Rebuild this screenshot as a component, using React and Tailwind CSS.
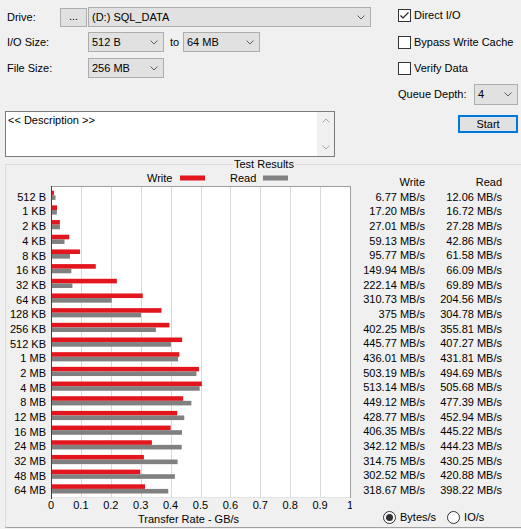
import React from 'react'

const ROWS = [
  ['512 B', '6.77', '12.06'],
  ['1 KB', '17.20', '16.72'],
  ['2 KB', '27.01', '27.28'],
  ['4 KB', '59.13', '42.86'],
  ['8 KB', '95.77', '61.58'],
  ['16 KB', '149.94', '66.09'],
  ['32 KB', '222.14', '69.89'],
  ['64 KB', '310.73', '204.56'],
  ['128 KB', '375', '304.78'],
  ['256 KB', '402.25', '355.81'],
  ['512 KB', '445.77', '407.27'],
  ['1 MB', '436.01', '431.81'],
  ['2 MB', '503.19', '494.69'],
  ['4 MB', '513.14', '505.68'],
  ['8 MB', '449.12', '477.39'],
  ['12 MB', '428.77', '452.94'],
  ['16 MB', '406.35', '445.22'],
  ['24 MB', '342.12', '444.23'],
  ['32 MB', '314.75', '430.25'],
  ['48 MB', '302.52', '420.88'],
  ['64 MB', '318.67', '398.22'],
]

const FONT = { fontFamily: '"Liberation Sans", Arial, sans-serif' }

function Chevron({ color = '#606060' }) {
  return (
    <svg width="8" height="5" viewBox="0 0 8 5" className="block">
      <polyline points="0.5,0.5 4,4 7.5,0.5" fill="none" stroke={color} strokeWidth="1" />
    </svg>
  )
}

function Combo({ value, className }) {
  return (
    <div className={`flex items-center border border-[#adadad] bg-[#e1e1e1] ${className}`}>
      <span className="flex-1 pl-[3px] leading-none">{value}</span>
      <span className="w-[18px] flex justify-center"><Chevron /></span>
    </div>
  )
}

function Check({ checked, label }) {
  return (
    <div className="flex items-center h-[17px]">
      <span className="w-[13px] h-[13px] border border-[#333] bg-white flex items-center justify-center">
        {checked && (
          <svg width="11" height="11" viewBox="0 0 11 11">
            <polyline points="1.5,5.5 4,8 9.5,2.5" fill="none" stroke="#222" strokeWidth="1.2" />
          </svg>
        )}
      </span>
      <span className="ml-[3px]">{label}</span>
    </div>
  )
}

function Radio({ checked, label }) {
  return (
    <div className="flex items-center">
      <span className="w-[13px] h-[13px] rounded-full border border-[#333] bg-white flex items-center justify-center">
        {checked && <span className="w-[7px] h-[7px] rounded-full bg-[#333]" />}
      </span>
      <span className="ml-[4px]">{label}</span>
    </div>
  )
}

function Chart() {
  const X0 = 51
  const PW = 299
  const TOP = 186
  const BOT = 498
  const c0 = 195.3
  const pitch = 14.68
  const xv = v => (parseFloat(v) / 1024) * PW
  return (
    <svg width="346" height="362" viewBox="6 165 346 362" className="block flex-shrink-0" style={FONT}>
      <text x="147" y="182" fontSize="11" fill="#000">Write</text>
      <rect x="180" y="175.5" width="25" height="5" fill="#e3161e" />
      <text x="230" y="182" fontSize="11" fill="#000">Read</text>
      <rect x="263" y="175.5" width="25" height="5" fill="#808080" />

      <rect x={X0} y={TOP} width={PW} height={BOT - TOP} fill="#fff" />
      {Array.from({ length: 9 }, (_, k) => {
        const x = Math.round(X0 + (k + 1) * 29.9) + 0.5
        return <line key={k} x1={x} x2={x} y1={TOP} y2={BOT} stroke="#dadada" />
      })}
      <line x1={X0} x2={X0 + PW + 0.5} y1={TOP + 0.5} y2={TOP + 0.5} stroke="#a0a0a0" />
      <line x1={X0 + PW + 0.5} x2={X0 + PW + 0.5} y1={TOP} y2={BOT} stroke="#a0a0a0" />
      <line x1={X0} x2={X0 + PW} y1={BOT - 0.5} y2={BOT - 0.5} stroke="#e4e4e4" />

      {ROWS.map(([label, w, r], i) => {
        const c = c0 + i * pitch
        return (
          <g key={label}>
            <rect x={X0 + 1} y={c - 4.6} width={xv(w)} height="4.6" fill="#e3161e" />
            <rect x={X0 + 1} y={c} width={xv(r)} height="4.6" fill="#808080" />
            <text x="46" y={c + 5.5} fontSize="11" textAnchor="end" fill="#000">{label}</text>
          </g>
        )
      })}
      <line x1={X0 + 0.5} x2={X0 + 0.5} y1={TOP} y2={BOT + 1} stroke="#404040" />

      {['0', '0.1', '0.2', '0.3', '0.4', '0.5', '0.6', '0.7', '0.8', '0.9', '1'].map((t, k) => (
        <text key={t} x={X0 + k * 29.9} y="509" fontSize="11" textAnchor="middle" fill="#000">{t}</text>
      ))}
      <text x="138" y="523" fontSize="11" fill="#000">Transfer Rate - GB/s</text>
    </svg>
  )
}

export default function App() {
  return (
    <div className="w-[521px] h-[529px] bg-[#f0f0f0] overflow-hidden text-[11px] text-black" style={FONT}>
      <div className="flex items-start">
        <div className="w-[393px] pl-[5px] pt-[7px]">
          <div className="flex items-center h-[20px]">
            <span className="w-[55px] pl-[2px]">Drive:</span>
            <button className="w-[27px] h-[19px] border border-[#adadad] bg-[#e1e1e1] flex items-center justify-center leading-none pb-[2px]">...</button>
            <Combo value="(D:) SQL_DATA" className="ml-px w-[283px] h-[20px]" />
          </div>
          <div className="flex items-center h-[20px] mt-[5px]">
            <span className="w-[83px] pl-[2px]">I/O Size:</span>
            <Combo value="512 B" className="w-[76px] h-[20px]" />
            <span className="w-[19px] pl-[6px]">to</span>
            <Combo value="64 MB" className="w-[77px] h-[20px]" />
          </div>
          <div className="flex items-center h-[20px] mt-[6px]">
            <span className="w-[83px] pl-[2px]">File Size:</span>
            <Combo value="256 MB" className="w-[76px] h-[20px]" />
          </div>
          <div className="mt-[33px] w-[330px] h-[46px] border border-[#7a7a7a] bg-white flex">
            <div className="flex-1 pl-[2px] pt-[2px] leading-[13px]">&lt;&lt; Description &gt;&gt;</div>
            <div className="w-[17px] bg-[#f0f0f0] flex flex-col items-center justify-between py-[6px]">
              <span className="rotate-180"><Chevron color="#a8a8a8" /></span>
              <Chevron color="#a8a8a8" />
            </div>
          </div>
        </div>
        <div className="ml-[5px] w-[120px] pt-[7px] flex flex-col">
          <Check checked label="Direct I/O" />
          <div className="mt-[10px]"><Check label="Bypass Write Cache" /></div>
          <div className="mt-[9px]"><Check label="Verify Data" /></div>
          <div className="mt-[7px] flex items-center justify-between h-[21px]">
            <span>Queue Depth:</span>
            <Combo value="4" className="w-[44px] h-[21px]" />
          </div>
          <button className="mt-[10px] self-end w-[60px] h-[18px] border-2 border-[#0078d7] bg-[#e1e1e1] leading-none flex items-center justify-center">Start</button>
        </div>
      </div>

      <div className="relative ml-[5px] mt-[7px] w-[520px] h-[364px] border-l border-t border-[#dcdcdc] border-b border-b-[#a0a0a0] flex">
        <span className="absolute left-[227px] -top-[7px] px-[1px] leading-[13px] bg-[#f0f0f0]">Test Results</span>
        <Chart />
        <div className="flex-1 flex flex-col pt-[9.8px]">
          {[['', 'Write', 'Read'], ...ROWS.map(([l, w, r]) => [l, `${w} MB/s`, `${r} MB/s`])].map(([l, w, r]) => (
            <div key={l + w} className="flex h-[14.68px] items-center">
              <span className="w-[73px] text-right whitespace-nowrap">{w}</span>
              <span className="w-[77px] text-right whitespace-nowrap">{r}</span>
            </div>
          ))}
          <div className="mt-auto mb-[3px] h-[14px] flex items-center pl-[31px] gap-[11px]">
            <Radio checked label="Bytes/s" />
            <Radio label="IO/s" />
          </div>
        </div>
      </div>
    </div>
  )
}
